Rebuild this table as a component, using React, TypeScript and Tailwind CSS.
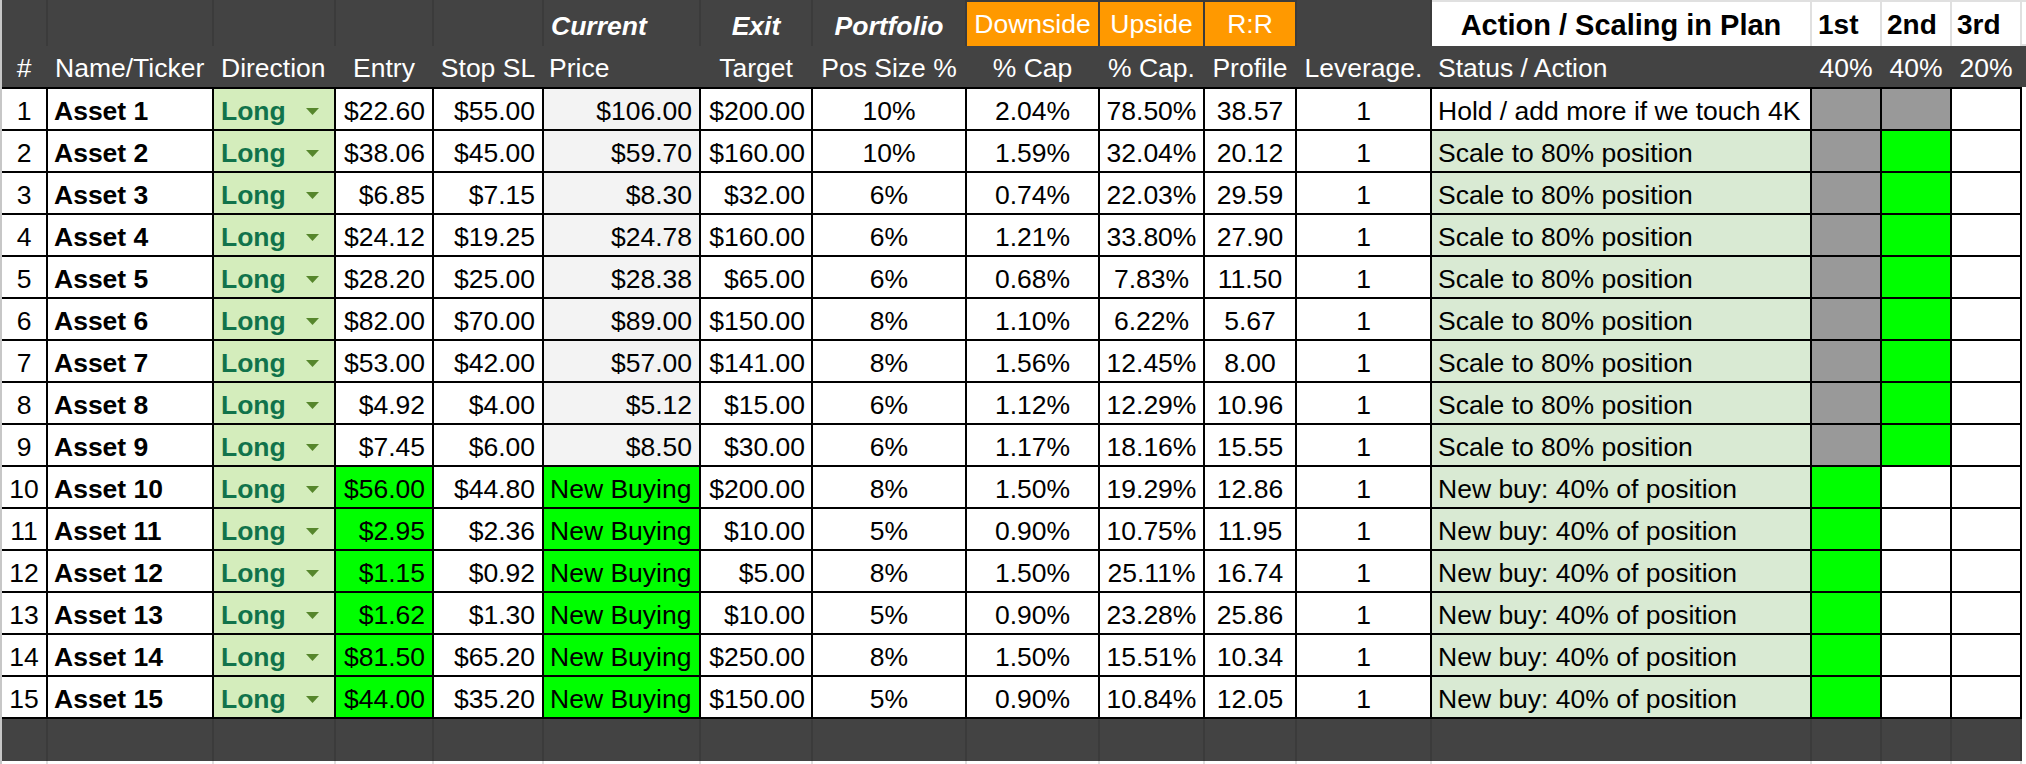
import React from 'react';

const cols =
  'grid grid-cols-[44px_164px_120px_96px_108px_155px_110px_152px_131px_103px_90px_133px_378px_68px_68px_68px] gap-x-[2px]';

type Row = {
  entry: string;
  stop: string;
  price: string;
  target: string;
  size: string;
  down: string;
  up: string;
  rr: string;
  status: string;
  first: 'gray' | 'green' | 'white';
  second: 'gray' | 'green' | 'white';
};

const rows: Row[] = [
  { entry: '$22.60', stop: '$55.00', price: '$106.00', target: '$200.00', size: '10%', down: '2.04%', up: '78.50%', rr: '38.57', status: 'Hold / add more if we touch 4K', first: 'gray', second: 'gray' },
  { entry: '$38.06', stop: '$45.00', price: '$59.70', target: '$160.00', size: '10%', down: '1.59%', up: '32.04%', rr: '20.12', status: 'Scale to 80% position', first: 'gray', second: 'green' },
  { entry: '$6.85', stop: '$7.15', price: '$8.30', target: '$32.00', size: '6%', down: '0.74%', up: '22.03%', rr: '29.59', status: 'Scale to 80% position', first: 'gray', second: 'green' },
  { entry: '$24.12', stop: '$19.25', price: '$24.78', target: '$160.00', size: '6%', down: '1.21%', up: '33.80%', rr: '27.90', status: 'Scale to 80% position', first: 'gray', second: 'green' },
  { entry: '$28.20', stop: '$25.00', price: '$28.38', target: '$65.00', size: '6%', down: '0.68%', up: '7.83%', rr: '11.50', status: 'Scale to 80% position', first: 'gray', second: 'green' },
  { entry: '$82.00', stop: '$70.00', price: '$89.00', target: '$150.00', size: '8%', down: '1.10%', up: '6.22%', rr: '5.67', status: 'Scale to 80% position', first: 'gray', second: 'green' },
  { entry: '$53.00', stop: '$42.00', price: '$57.00', target: '$141.00', size: '8%', down: '1.56%', up: '12.45%', rr: '8.00', status: 'Scale to 80% position', first: 'gray', second: 'green' },
  { entry: '$4.92', stop: '$4.00', price: '$5.12', target: '$15.00', size: '6%', down: '1.12%', up: '12.29%', rr: '10.96', status: 'Scale to 80% position', first: 'gray', second: 'green' },
  { entry: '$7.45', stop: '$6.00', price: '$8.50', target: '$30.00', size: '6%', down: '1.17%', up: '18.16%', rr: '15.55', status: 'Scale to 80% position', first: 'gray', second: 'green' },
  { entry: '$56.00', stop: '$44.80', price: 'New Buying', target: '$200.00', size: '8%', down: '1.50%', up: '19.29%', rr: '12.86', status: 'New buy: 40% of position', first: 'green', second: 'white' },
  { entry: '$2.95', stop: '$2.36', price: 'New Buying', target: '$10.00', size: '5%', down: '0.90%', up: '10.75%', rr: '11.95', status: 'New buy: 40% of position', first: 'green', second: 'white' },
  { entry: '$1.15', stop: '$0.92', price: 'New Buying', target: '$5.00', size: '8%', down: '1.50%', up: '25.11%', rr: '16.74', status: 'New buy: 40% of position', first: 'green', second: 'white' },
  { entry: '$1.62', stop: '$1.30', price: 'New Buying', target: '$10.00', size: '5%', down: '0.90%', up: '23.28%', rr: '25.86', status: 'New buy: 40% of position', first: 'green', second: 'white' },
  { entry: '$81.50', stop: '$65.20', price: 'New Buying', target: '$250.00', size: '8%', down: '1.50%', up: '15.51%', rr: '10.34', status: 'New buy: 40% of position', first: 'green', second: 'white' },
  { entry: '$44.00', stop: '$35.20', price: 'New Buying', target: '$150.00', size: '5%', down: '0.90%', up: '10.84%', rr: '12.05', status: 'New buy: 40% of position', first: 'green', second: 'white' },
];

const fill = {
  gray: 'bg-[#999999]',
  green: 'bg-[#00ff00]',
  white: 'bg-white',
};

const Cell: React.FC<{ className?: string; children?: React.ReactNode }> = ({ className = '', children }) => (
  <div className={`flex items-end pb-[3px] overflow-hidden whitespace-nowrap ${className}`}>{children}</div>
);

const DirectionCell: React.FC = () => (
  <div className="flex items-end justify-between pb-[3px] pl-[7px] pr-[15px] bg-[#d4edbc]">
    <span className="font-bold text-[#11734b]">Long</span>
    <div className="h-[30px] flex items-center">
      <svg width="13" height="7" viewBox="0 0 13 7">
        <path d="M0 0 L13 0 L6.5 7 Z" fill="#56862c" />
      </svg>
    </div>
  </div>
);

const HeaderTop: React.FC = () => (
  <div className="flex h-[46px]">
    <div className="grid grid-cols-[44px_164px_120px_96px_108px_155px_110px_152px_131px_103px_90px_133px] gap-x-[2px] bg-[#3b3b3b] pr-[2px] text-white">
      <div className="bg-[#434343]" />
      <div className="bg-[#434343]" />
      <div className="bg-[#434343]" />
      <div className="bg-[#434343]" />
      <div className="bg-[#434343]" />
      <Cell className="bg-[#434343] pl-[7px] pb-[5px] font-bold italic">Current</Cell>
      <Cell className="bg-[#434343] justify-center pb-[5px] font-bold italic">Exit</Cell>
      <Cell className="bg-[#434343] justify-center pb-[5px] font-bold italic">Portfolio</Cell>
      <Cell className="bg-[#ff9900] justify-center pb-[7px] mt-[2px]">Downside</Cell>
      <Cell className="bg-[#ff9900] justify-center pb-[7px] mt-[2px]">Upside</Cell>
      <Cell className="bg-[#ff9900] justify-center pb-[7px] mt-[2px]">R:R</Cell>
      <div className="bg-[#434343]" />
    </div>
    <div className="grid grid-cols-[378px_68px_68px_68px] gap-x-[2px] bg-[#e0e0e0] pt-[2px] pr-[2px] text-black font-bold text-[29px] leading-[32px]">
      <Cell className="bg-white justify-center pb-[5px]">Action / Scaling in Plan</Cell>
      <Cell className="bg-white pl-[6px] pb-[5px] text-[28px]">1st</Cell>
      <Cell className="bg-white pl-[5px] pb-[5px] text-[28px]">2nd</Cell>
      <Cell className="bg-white pl-[5px] pb-[5px] text-[28px]">3rd</Cell>
    </div>
  </div>
);

const HeaderBottom: React.FC = () => (
  <div className={`${cols} h-[41px] bg-[#434343] pr-[2px] text-white`}>
    <Cell className="justify-center pb-[4px]">#</Cell>
    <Cell className="pl-[7px] pb-[4px]">Name/Ticker</Cell>
    <Cell className="pl-[7px] pb-[4px]">Direction</Cell>
    <Cell className="justify-center pb-[4px]">Entry</Cell>
    <Cell className="justify-center pb-[4px]">Stop SL</Cell>
    <Cell className="pl-[5px] pb-[4px]">Price</Cell>
    <Cell className="justify-center pb-[4px]">Target</Cell>
    <Cell className="justify-center pb-[4px]">Pos Size %</Cell>
    <Cell className="justify-center pb-[4px]">% Cap</Cell>
    <Cell className="justify-center pb-[4px]">% Cap.</Cell>
    <Cell className="justify-center pb-[4px]">Profile</Cell>
    <Cell className="justify-center pb-[4px]">Leverage.</Cell>
    <Cell className="pl-[6px] pb-[4px]">Status / Action</Cell>
    <Cell className="justify-center pb-[4px]">40%</Cell>
    <Cell className="justify-center pb-[4px]">40%</Cell>
    <Cell className="justify-center pb-[4px]">20%</Cell>
  </div>
);

const DataRow: React.FC<{ index: number; row: Row }> = ({ index, row }) => {
  const buying = row.price === 'New Buying';
  return (
    <div className={`${cols} h-[40px] text-black`}>
      <Cell className="bg-white justify-center">{index}</Cell>
      <Cell className="bg-white pl-[6px] font-bold">Asset {index}</Cell>
      <DirectionCell />
      <Cell className={`${buying ? 'bg-[#00ff00]' : 'bg-white'} justify-end pr-[7px]`}>{row.entry}</Cell>
      <Cell className="bg-white justify-end pr-[7px]">{row.stop}</Cell>
      {buying ? (
        <Cell className="bg-[#00ff00] pl-[6px]">{row.price}</Cell>
      ) : (
        <Cell className="bg-[#f3f3f3] justify-end pr-[7px]">{row.price}</Cell>
      )}
      <Cell className="bg-white justify-end pr-[6px]">{row.target}</Cell>
      <Cell className="bg-white justify-center">{row.size}</Cell>
      <Cell className="bg-white justify-center">{row.down}</Cell>
      <Cell className="bg-white justify-center">{row.up}</Cell>
      <Cell className="bg-white justify-center">{row.rr}</Cell>
      <Cell className="bg-white justify-center">1</Cell>
      <Cell className={`${index === 1 ? 'bg-white' : 'bg-[#d9ead3]'} pl-[6px]`}>{row.status}</Cell>
      <div className={fill[row.first]} />
      <div className={fill[row.second]} />
      <div className="bg-white" />
    </div>
  );
};

const blanks = Array.from({ length: 16 }, (_, i) => i);

const App: React.FC = () => {
  return (
    <div className="flex w-[2026px] h-[764px] overflow-hidden bg-white font-['Liberation_Sans',Arial,sans-serif] text-[26.5px] leading-[30px]">
      <div className="w-[2px] shrink-0 bg-[#c7c7c7]" />
      <div className="w-[2020px] shrink-0 flex flex-col">
        <HeaderTop />
        <HeaderBottom />
        <div className="flex flex-col gap-y-[2px] bg-black py-[2px] pr-[2px]">
          {rows.map((row, i) => (
            <DataRow key={i} index={i + 1} row={row} />
          ))}
        </div>
        <div className={`${cols} h-[42px] bg-[#3b3b3b] pr-[2px]`}>
          {blanks.map((i) => (
            <div key={i} className="bg-[#434343]" />
          ))}
        </div>
        <div className={`${cols} h-[3px] bg-[#e0e0e0] pr-[2px]`}>
          {blanks.map((i) => (
            <div key={i} className="bg-white" />
          ))}
        </div>
      </div>
      <div className="flex-1 flex flex-col">
        <div className="h-[2px] bg-[#e0e0e0]" />
        <div className="h-[44px] border-b-2 border-[#e0e0e0]" />
        <div className="h-[41px] bg-[#434343]" />
      </div>
    </div>
  );
};

export default App;
